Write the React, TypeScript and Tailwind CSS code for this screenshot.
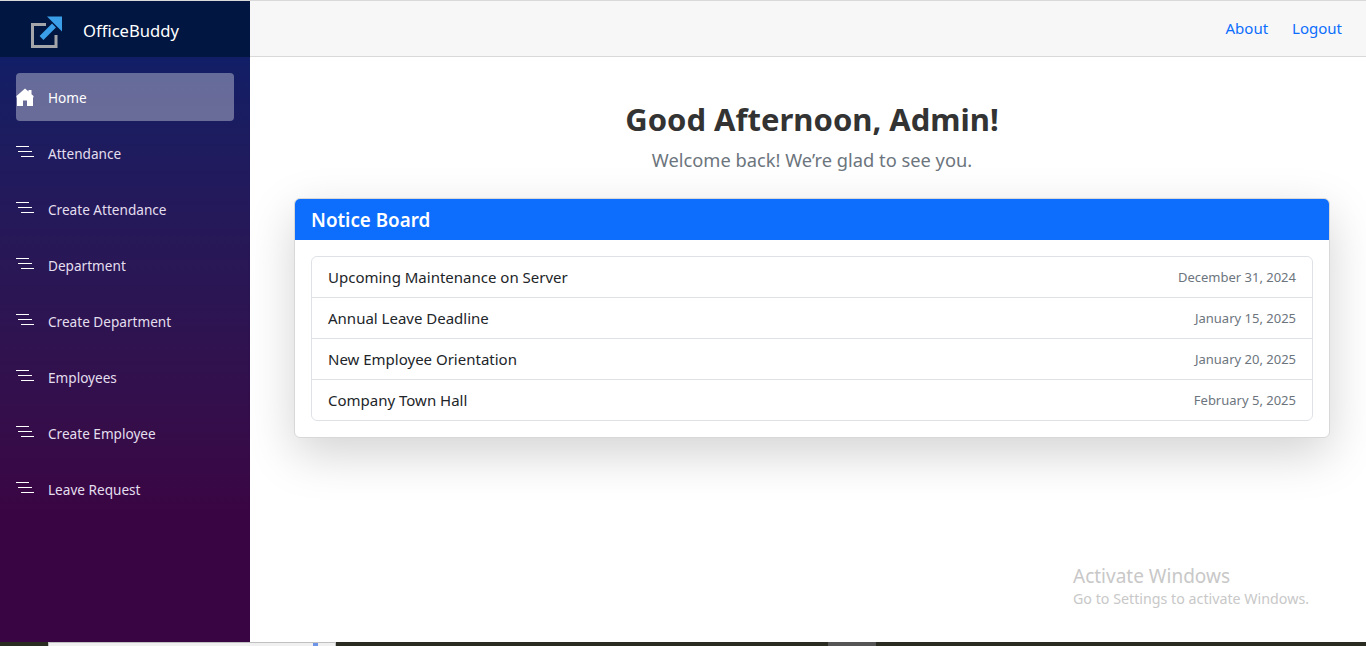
import React from 'react';

const NAV_ITEMS = [
  'Attendance',
  'Create Attendance',
  'Department',
  'Create Department',
  'Employees',
  'Create Employee',
  'Leave Request',
];

const NOTICES = [
  { title: 'Upcoming Maintenance on Server', date: 'December 31, 2024' },
  { title: 'Annual Leave Deadline', date: 'January 15, 2025' },
  { title: 'New Employee Orientation', date: 'January 20, 2025' },
  { title: 'Company Town Hall', date: 'February 5, 2025' },
];

const LogoIcon = () => (
  <svg width="32" height="32" viewBox="0 0 32 32" fill="none">
    <path d="M15 8.5H1.5V30.5H25V19" stroke="#a3a5a8" strokeWidth="3" />
    <path d="M10.5 22L23 9.5" stroke="#3a9fe8" strokeWidth="5.5" />
    <path d="M16 0.5H31V15.5L26 10.5L21 5.5Z" fill="#3a9fe8" />
  </svg>
);

const HomeIcon = () => (
  <svg width="18" height="18" viewBox="0 0 18 18" fill="#fff">
    <path d="M9 0.5L0.5 8V9.5H1V18H7V12.5H11V18H17V9.5H17.5V8L15.5 6.2V2H12.5V3.6Z" />
  </svg>
);

const LinesIcon = () => (
  <svg className="mb-[2px]" width="18" height="12" viewBox="0 0 18 12" fill="none" stroke="#fff" strokeWidth="1.2">
    <path d="M0 0.5H13M2 5.5H16M5 10.5H18" />
  </svg>
);

export default function App() {
  return (
    <div className="flex h-[646px] flex-col overflow-hidden bg-white font-['Noto_Sans','Open_Sans',sans-serif]">
      <div className="flex min-h-0 flex-1">
        <aside className="flex w-[250px] shrink-0 flex-col border-t border-[#d9d9d9] bg-gradient-to-b from-[#04206a] to-[#3a0543] to-[80%]">
          <div className="flex h-[56px] items-center gap-[20px] bg-[#011640] pl-[31px] pt-[5px] text-[16.6px] text-white">
            <LogoIcon />
            <span className="-mt-[1px]">OfficeBuddy</span>
          </div>
          <nav className="flex flex-col gap-2 px-4 pt-[16px] text-[13.6px] text-[#e4dfee]">
            <a className="flex h-12 items-center gap-[14px] rounded bg-white/35 text-white">
              <HomeIcon />
              <span className="pt-[2px]">Home</span>
            </a>
            {NAV_ITEMS.map(item => (
              <a key={item} className="flex h-12 items-center gap-[14px]">
                <LinesIcon />
                <span className="pt-[2px]">{item}</span>
              </a>
            ))}
          </nav>
        </aside>

        <div className="flex min-w-0 flex-1 flex-col">
          <header className="flex h-[57px] items-center justify-end gap-6 border-y border-[#d9d9d9] bg-[#f7f7f7] pr-6 text-[15px] text-[#0d6efd]">
            <a>About</a>
            <a>Logout</a>
          </header>

          <main className="relative flex-1 pl-[44px] pr-[36px] pt-[41px]">
            <h1 className="text-center text-[31px] leading-[42px] font-bold text-[#333333]">Good Afternoon, Admin!</h1>
            <p className="mt-[8px] text-center text-[18.3px] leading-[24px] text-[#6c757d]">Welcome back! We’re glad to see you.</p>

            <section className="mt-[26px] overflow-hidden rounded-md border border-[#d8d8d8] bg-white shadow-[0_16px_48px_rgba(0,0,0,0.175)]">
              <div className="flex h-[41px] items-center bg-[#0d6efd] px-4 pt-[2px] text-[18.8px] font-semibold text-white">Notice Board</div>
              <ul className="m-4 rounded-md border border-[#dee2e6]">
                {NOTICES.map(notice => (
                  <li key={notice.title} className="flex h-[41px] items-center justify-between border-b border-[#dee2e6] px-4 text-[#212529] last:h-10 last:border-b-0">
                    <span className="text-[15px]">{notice.title}</span>
                    <span className="pt-[2px] text-[13px] text-[#6c757d]">{notice.date}</span>
                  </li>
                ))}
              </ul>
            </section>

            <div className="absolute left-[823px] top-[506px] text-[#c8c8c8]">
              <div className="text-[19px] leading-[26px]">Activate Windows</div>
              <div className="text-[14.25px] leading-[20px]">Go to Settings to activate Windows.</div>
            </div>
          </main>
        </div>
      </div>

      <div className="flex h-1 shrink-0 bg-[#2a2c21]">
        <div className="relative ml-[48px] w-[288px] border-l border-t border-r border-[#c0c0c0] bg-[#f0f0f0]">
          <div className="absolute left-[264px] top-0 h-[3px] w-[5px] bg-[#6e94e8]" />
        </div>
        <div className="ml-[492px] w-[48px] bg-[#555555]" />
      </div>
    </div>
  );
}
